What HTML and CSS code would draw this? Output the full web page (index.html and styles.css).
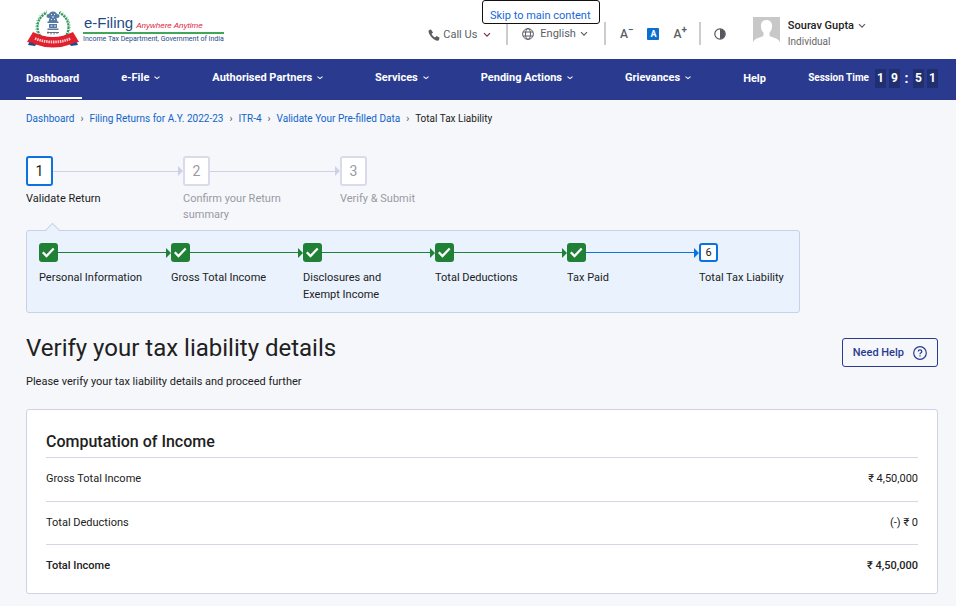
FILE: index.html
```html
<!DOCTYPE html>
<html lang="en">
<head>
<meta charset="utf-8">
<meta name="viewport" content="width=device-width, initial-scale=1">
<title>Total Tax Liability - e-Filing</title>
<link rel="stylesheet" href="styles.css">
</head>
<body>
<svg class="defs" aria-hidden="true">
  <symbol id="chevron" viewBox="0 0 8 6"><path d="M1 1.2 4 4.2 7 1.2" fill="none" stroke="currentColor" stroke-width="1.2"/></symbol>
  <symbol id="caret" viewBox="0 0 6 4"><path d="M.5 .6 3 2.600 5.500 .6" fill="none" stroke="currentColor" stroke-width="1.1"/></symbol>
  <symbol id="check" viewBox="0 0 19 19"><path d="M3.800 9.300 7.500 13 14.700 5.500" fill="none" stroke="#fff" stroke-width="2.300"/></symbol>
</svg>
<a class="skip" href="#main">Skip to main content</a>
<header class="header">
  <a class="logo" href="#">
    <svg class="emblem" viewBox="0 0 52 38" aria-hidden="true">
      <circle cx="26" cy="17" r="15.500" fill="none" stroke="#2f9a5b" stroke-width="2.200" stroke-dasharray="2.200 .8"/>
      <circle cx="26" cy="17" r="17" fill="none" stroke="#6dbd8a" stroke-width="1.200" stroke-dasharray="1.200 1.600"/>
      <path d="M20 0h12v4h-12z" fill="#fff"/>
      <g fill="#557ba5">
        <path d="M22.500 3q3.500-2.800 7 0l1 3-1 2 1 4h-9l1-4-1-2z"/>
        <circle cx="21.500" cy="6" r="2"/><circle cx="30.500" cy="6" r="2"/>
        <path d="M20.500 11.500h11v1.500h-11zM22 14h8v4h-8zM20.500 18.500h11v1.500h-11z"/>
      </g>
      <path d="M24 4.500h1M27 4.500h1M25 7h2M24 9.500h1M27 9.500h1M23.500 16h2M27 16h2" stroke="#e9f0f7" stroke-width="1"/>
      <path d="M20 22.500h12M21 21.500v2.500M24 22v2.500M27 22v2.500M30 22v2" stroke="#5b6475" stroke-width=".9"/>
      <path d="M1 35l4-9 6 6-3 4zM51 35l-4-9-6 6 3 4z" fill="#1d4b86"/>
      <path d="M6 22q20 10 40 0l6 10-6 1-1 1q-19 7-38 0l-1-1-6-1z" fill="#e0202f"/>
      <path d="M8 28.500q18 7 36 0" fill="none" stroke="#f8c9cc" stroke-width="2.800" stroke-dasharray="1.500 .8"/>
    </svg>
    <span class="brand">
      <span class="brand-top"><span class="brand-name">e-Filing</span><span class="brand-tag">Anywhere Anytime</span></span>
      <span class="brand-dept">Income Tax Department, Government of India</span>
    </span>
  </a>
  <div class="tools">
    <div class="tool"><button class="plain call" type="button">
      <svg class="i12" viewBox="0 0 24 24" aria-hidden="true"><path fill="#5a5f66" d="M6 1 2 2Q0 4 2 9q5 10 14 14 5 1 6-1l1-5-6-3-3 3Q9 14 7 10l3-3z"/></svg>
      <span>Call Us</span><svg class="chev wine" aria-hidden="true"><use href="#chevron"/></svg></button></div>
    <div class="tool language"><button class="plain" type="button">
      <svg class="i12" viewBox="0 0 12 12" fill="none" stroke="#5a5f66" aria-hidden="true"><circle cx="6" cy="6" r="5.400"/><ellipse cx="6" cy="6" rx="2.500" ry="5.400"/><path d="M1 4h10M1 8h10"/></svg>
      <span>English</span><svg class="chev" aria-hidden="true"><use href="#chevron"/></svg></button></div>
    <div class="tool sizes">
      <button class="plain size" type="button" aria-label="Decrease text size">A<sup>−</sup></button>
      <button class="plain size-on" type="button" aria-label="Default text size">A</button>
      <button class="plain size" type="button" aria-label="Increase text size">A<sup>+</sup></button>
    </div>
    <div class="tool contrast"><button class="plain" type="button" aria-label="Contrast">
      <svg class="i12" viewBox="0 0 12 12" aria-hidden="true"><circle cx="6" cy="6" r="5.200" fill="#fff" stroke="#55585c" stroke-width="1.200"/><path d="M6 1a5 5 0 0 1 0 10z" fill="#55585c"/></svg></button></div>
    <div class="user">
      <svg class="avatar" viewBox="0 0 27 27" aria-hidden="true"><path fill="#c8c8c8" d="M0 0h27v27H0z"/><path fill="#fff" d="M13.500 3c4 0 6 3 5.500 7-.2 3-1.500 4.500-2.500 5.500v3c1 2 9 2 10.500 7V27H0v-1.500c1.500-5 9.500-5 10.500-7v-3C9.500 14.500 8.200 13 8 10c-.5-4 1.500-7 5.500-7z"/></svg>
      <div class="user-text"><button class="plain user-name" type="button"><span>Sourav Gupta</span><svg class="chev" aria-hidden="true"><use href="#chevron"/></svg></button>
      <div class="user-role">Individual</div></div>
    </div>
  </div>
</header>
<nav class="nav">
  <a class="current" href="#">Dashboard</a>
  <a href="#">e-File <svg class="caret" aria-hidden="true"><use href="#caret"/></svg></a>
  <a href="#">Authorised Partners <svg class="caret" aria-hidden="true"><use href="#caret"/></svg></a>
  <a href="#">Services <svg class="caret" aria-hidden="true"><use href="#caret"/></svg></a>
  <a href="#">Pending Actions <svg class="caret" aria-hidden="true"><use href="#caret"/></svg></a>
  <a href="#">Grievances <svg class="caret" aria-hidden="true"><use href="#caret"/></svg></a>
  <a class="plain-link" href="#">Help</a>
  <div class="session"><span class="session-label">Session Time</span><span class="digit">1</span><span class="digit">9</span><span class="colon">:</span><span class="digit">5</span><span class="digit">1</span></div>
</nav>
<main id="main" class="page">
  <ol class="crumbs">
    <li><a href="#">Dashboard</a></li>
    <li><a href="#">Filing Returns for A.Y. 2022-23</a></li>
    <li><a href="#">ITR-4</a></li>
    <li><a href="#">Validate Your Pre-filled Data</a></li>
    <li>Total Tax Liability</li>
  </ol>
  <ol class="steps">
    <li class="active"><div class="track"><span class="box">1</span></div><span>Validate Return</span></li>
    <li><div class="track"><span class="box">2</span></div><span class="wrap">Confirm your Return summary</span></li>
    <li><div class="track"><span class="box">3</span></div><span>Verify &amp; Submit</span></li>
  </ol>
  <ol class="substeps">
    <li><div class="track"><svg class="done" role="img" aria-label="Completed"><use href="#check"/></svg></div><span>Personal Information</span></li>
    <li><div class="track"><svg class="done" role="img" aria-label="Completed"><use href="#check"/></svg></div><span>Gross Total Income</span></li>
    <li><div class="track"><svg class="done" role="img" aria-label="Completed"><use href="#check"/></svg></div><span class="wrap">Disclosures and Exempt Income</span></li>
    <li><div class="track"><svg class="done" role="img" aria-label="Completed"><use href="#check"/></svg></div><span>Total Deductions</span></li>
    <li class="next"><div class="track"><svg class="done" role="img" aria-label="Completed"><use href="#check"/></svg></div><span>Tax Paid</span></li>
    <li><div class="track"><span class="number">6</span></div><span>Total Tax Liability</span></li>
  </ol>
  <div class="heading">
    <div><h1>Verify your tax liability details</h1>
    <p>Please verify your tax liability details and proceed further</p></div>
    <button class="help" type="button">Need Help
      <svg class="help-icon" viewBox="0 0 14 14" fill="none" stroke="#2a3b8f" aria-hidden="true"><circle cx="7" cy="7" r="6.300" stroke-width="1.200"/><path d="M5.200 5.500Q5.300 3.800 7 3.800t1.800 1.600Q8.800 6.300 7.700 7 7 7.400 7 8.300M7 9.300v1.300" stroke-width="1.200"/></svg>
    </button>
  </div>
  <section class="card">
    <h2>Computation of Income</h2>
    <table>
      <tr><th scope="row">Gross Total Income</th><td>₹ 4,50,000</td></tr>
      <tr><th scope="row">Total Deductions</th><td>(-) ₹ 0</td></tr>
      <tr class="total"><th scope="row">Total Income</th><td>₹ 4,50,000</td></tr>
    </table>
  </section>
</main>
</body>
</html>
```
FILE: styles.css
```css
* { box-sizing: border-box; }
body { margin: 0; background: #f5f7fb; color: #212121; font: 11px/16px Roboto, "Noto Sans", sans-serif; }
a { color: inherit; text-decoration: none; }
ol { list-style: none; margin: 0; padding: 0; }
svg { display: block; flex: none; }
.defs { position: absolute; width: 0; height: 0; }
.plain { display: flex; align-items: center; padding: 0; border: 0; background: none; color: #5a5f66; font: inherit; }
.i12 { width: 12px; height: 12px; }
.chev { width: 8px; height: 6px; color: #5a5f66; }

.skip { position: absolute; left: 482px; top: 0; padding: 6px 8px 6px 7px; height: 24px; border: 1px solid #111; border-radius: 3px; background: #fff; color: #1668dc; font-size: 11px; line-height: 17px; white-space: nowrap; }

.header { display: flex; justify-content: space-between; height: 59px; padding: 0 90px 0 27px; background: #fff; }
.logo { display: flex; gap: 4px; padding-top: 10px; }
.emblem { width: 52px; height: 38px; }
.brand { display: flex; flex-direction: column; padding-top: 4px; white-space: nowrap; font-family: "Liberation Sans", sans-serif; color: #1d4b86; }
.brand-top { display: flex; align-items: baseline; gap: 3px; height: 20px; padding-left: 1px; border-bottom: 2px solid #43a657; line-height: 18px; }
.brand-name { font-size: 15px; }
.brand-tag { font-size: 8px; font-style: italic; color: #e0203c; }
.brand-dept { font-family: Roboto, sans-serif; font-size: 7px; line-height: 10px; }

.tools { display: flex; padding-top: 22px; }
.tool { display: flex; height: 23px; padding-right: 15px; border-right: 2px solid #ccc; }
.tool .plain { gap: 4px; }
.tool .call { gap: 3px; padding-top: 2px; }
.tool .chev { margin-left: 3px; }
.tool .wine { color: #7c3049; }
.language { padding-left: 14px; padding-right: 16px; }
.language .plain { gap: 6px; }
.language .chev { margin-left: -2px; }
.sizes { gap: 14px; align-items: center; padding: 0 12px 0 14px; }
.tool .size { gap: 0; font-size: 12px; font-weight: 500; }
.size sup { font-size: 10px; line-height: 8px; align-self: flex-start; font-weight: 700; }
.tool .size-on { justify-content: center; width: 12px; height: 12px; border-radius: 1px; background: #0b6ed0; color: #fff; font-size: 9px; font-weight: 700; line-height: 12px; }
.contrast { padding: 0 27px 0 13px; border: 0; }
.user { display: flex; gap: 8px; margin-top: -5px; }
.user-text { padding-top: 1px; }
.avatar { width: 27px; height: 27px; }
.user-name { gap: 4px; color: #212121; font-weight: 500; }
.user-role { color: #666; font-size: 10px; }

.nav { display: flex; gap: 52px; height: 41px; padding: 0 18px 0 26px; background: #2a3b8f; color: #fff; font-weight: 700; white-space: nowrap; }
.nav a { display: flex; align-items: center; gap: 5px; padding-bottom: 3px; }
.nav .plain-link { padding-bottom: 1px; }
.nav .current { margin-right: -13px; padding: 1px 3px 0 0; border-bottom: 2px solid #fff; height: 40px; }
.caret { width: 6px; height: 4px; }
.nav .plain-link { margin-right: -12px; }
.session { display: flex; align-items: center; gap: 3px; margin-left: auto; padding-bottom: 3px; }
.session-label { margin-right: 3px; font-size: 10px; font-weight: 700; }
.digit { width: 11px; height: 19px; background: #202f70; font-size: 12px; line-height: 19px; text-align: center; }
.colon { width: 7px; font-size: 14px; text-align: center; }

.page { padding: 11px 18px 12px 26px; }
.crumbs { display: flex; font-size: 10px; }
.crumbs a { color: #1264c8; }
.crumbs li + li::before { content: "›"; padding: 0 6px; color: #555; }

.steps { display: flex; margin-top: 29px; color: #9a9aa3; }
.steps li { width: 157px; }
.track { display: flex; align-items: center; margin-bottom: 5px; }
.box { display: grid; place-items: center; width: 27px; height: 30px; border: 2px solid #d9daea; border-radius: 3px; background: #fff; font-size: 14px; }
li:not(:last-child) > .track::before { content: ""; order: 1; flex: 1; height: 1px; background: #cfd1e8; }
li:not(:last-child) > .track::after { content: ""; order: 2; border: solid transparent; border-width: 5px 0 5px 5px; border-left-color: #cfd1e8; }
.active { color: #212121; }
.active .box { border-color: #0b72e0; }
.wrap { display: block; max-width: 112px; }

.substeps { position: relative; display: flex; max-width: 774px; height: 83px; margin-top: 7px; padding: 12px; border: 1px solid #c5d2ea; border-radius: 3px; background: #eaf3fd; line-height: 17px; }
.substeps::before { content: ""; position: absolute; left: 20px; top: -6px; width: 10px; height: 10px; border: solid #c5d2ea; border-width: 1px 0 0 1px; background: linear-gradient(135deg, #eaf3fd 50%, transparent 50%); transform: rotate(45deg); }
.substeps li { flex: 0 0 132px; white-space: nowrap; }
.substeps .wrap { max-width: 90px; white-space: normal; }
.substeps .track { margin-bottom: 7px; }
.done { width: 19px; height: 19px; border-radius: 3px; background: #1f8036; }
.number { display: grid; place-items: center; width: 19px; height: 19px; border: 2px solid #0b72e0; border-radius: 3px; background: #fff; line-height: 15px; }
.substeps li:not(:last-child) > .track::before { background: #1f8036; }
.substeps li:not(:last-child) > .track::after { border-left-color: #1f8036; }
.substeps li.next > .track::before { background: #0b72e0; }
.substeps li.next > .track::after { border-left-color: #0b72e0; }

.heading { display: flex; justify-content: space-between; align-items: flex-start; padding-top: 19px; }
h1 { margin: 0; font-size: 24px; line-height: 32px; font-weight: 400; }
p { margin: 10px 0 0; }
.help { display: flex; align-items: center; gap: 9px; height: 29px; margin-top: 6px; padding: 0 10px; border: 1px solid #2a3b8f; border-radius: 3px; background: transparent; color: #2a3b8f; font: 500 11px/16px Roboto, sans-serif; }
.help-icon { width: 14px; height: 14px; }

.card { margin-top: 19px; padding: 20px 19px 6px; border: 1px solid #cfd1e8; border-radius: 3px; background: #fff; }
h2 { margin: 0; padding-bottom: 3px; border-bottom: 1px solid #d6d7e6; font-size: 16px; line-height: 24px; font-weight: 500; }
table { width: 100%; border-collapse: collapse; }
th, td { height: 43px; padding: 0; font-weight: 400; text-align: left; }
td { text-align: right; }
tr + tr { border-top: 1px solid #d6d7e6; }
.total th, .total td { font-weight: 500; }
```
